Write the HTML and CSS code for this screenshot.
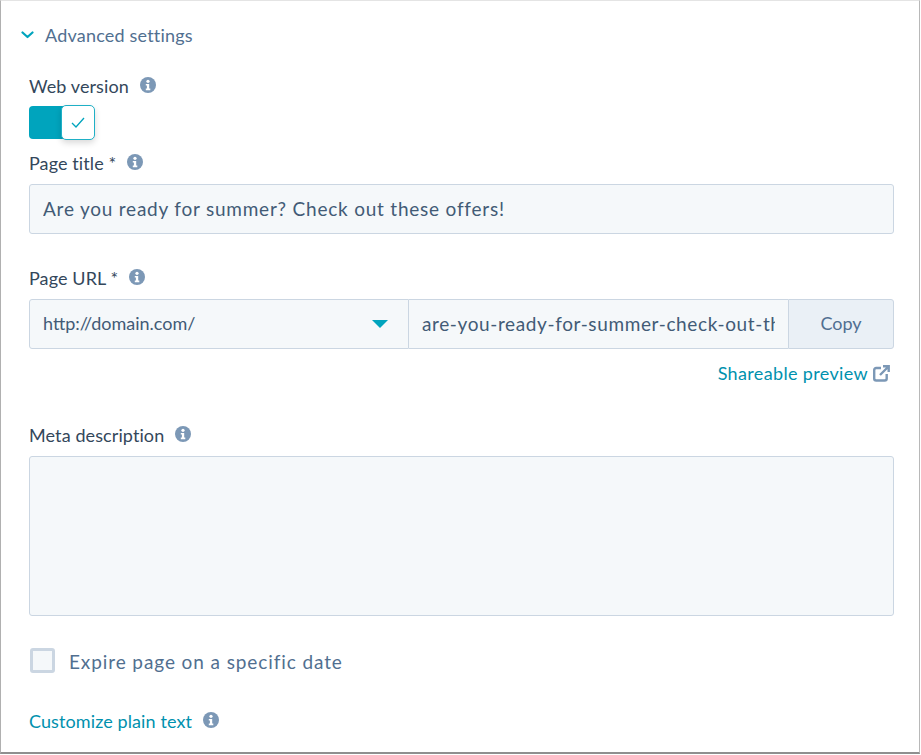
FILE: index.html
```html
<!DOCTYPE html>
<html lang="en">
<head>
    <meta charset="UTF-8">
    <title>Advanced settings</title>
    <link rel="stylesheet" href="styles.css">
</head>
<body>

<svg class="defs" width="0" height="0">
    <symbol id="info" viewBox="0 0 16 16">
        <circle cx="8" cy="8" r="8" fill="#7c98b6"/>
        <circle cx="8" cy="4.3" r="1.6" fill="#fff"/>
        <path d="M5.8 7h3.4v4.6h1.1v1.6H5.8v-1.6h1.1V8.6H5.8z" fill="#fff"/>
    </symbol>
</svg>

<div class="panel">
    <div class="toggleHeader">
        <svg class="chevron" width="13" height="8" viewBox="0 0 13 8"><path d="M1.5 1.5l5 4.5 5-4.5" fill="none" stroke="#00a4bd" stroke-width="2.2" stroke-linecap="round" stroke-linejoin="round"/></svg>
        <span>Advanced settings</span>
    </div>

    <!-- Web version -->
    <div class="labelRow first">
        <label>Web version</label>
        <svg class="info"><use href="#info"/></svg>
    </div>
    <div class="switch">
        <div class="switchKnob">
            <svg width="14" height="11" viewBox="0 0 14 11"><path d="M1 6l4 4 8-9" fill="none" stroke="#00a4bd" stroke-width="1.3"/></svg>
        </div>
    </div>

    <!-- Page title -->
    <div class="labelRow title">
        <label for="title">Page title *</label>
        <svg class="info"><use href="#info"/></svg>
    </div>
    <input type="text" id="title" class="field" value="Are you ready for summer? Check out these offers!">

    <!-- Page URL -->
    <div class="labelRow url">
        <label for="slug">Page URL *</label>
        <svg class="info"><use href="#info"/></svg>
    </div>
    <div class="urlRow">
        <div class="domain">
            <span>http://domain.com/</span>
            <span class="caret"></span>
        </div>
        <input type="text" id="slug" class="slug" value="are-you-ready-for-summer-check-out-these-offers">
        <button type="button" class="copyBtn">Copy</button>
    </div>
    <div class="previewRow">
        <a href="#" class="link">Shareable preview</a>
        <svg width="17" height="17" viewBox="0 0 17 17"><path d="M8 3H3.200C2 3 1.200 3.800 1.200 5v8.500c0 1.200.8 2 2 2h8.500c1.200 0 2-.8 2-2V9" fill="none" stroke="#7c98b6" stroke-width="2.400"/><path d="M10 1.300h5.700V7M15.500 1.500L7 10" fill="none" stroke="#7c98b6" stroke-width="2.400"/></svg>
    </div>

    <!-- Meta description -->
    <div class="labelRow meta">
        <label for="description">Meta description</label>
        <svg class="info"><use href="#info"/></svg>
    </div>
    <textarea id="description" class="field area"></textarea>

    <label class="checkRow">
        <input type="checkbox" class="check">
        <span>Expire page on a specific date</span>
    </label>

    <div class="labelRow plain">
        <a href="#" class="link">Customize plain text</a>
        <svg class="info"><use href="#info"/></svg>
    </div>
</div>

</body>
</html>
```

FILE: styles.css
```css
* {
    box-sizing: border-box;
}
html, body {
    margin: 0;
    height: 755px;
    overflow: hidden;
    background: #fff;
}
body {
    font-family: Lato, "Open Sans", sans-serif;
    font-size: 18px;
    color: #33475b;
}
.defs {
    position: absolute;
}
.panel {
    width: 920px;
    height: 754px;
    border-top: 1px solid #e4e4e4;
    border-left: 1px solid #b0b0b0;
    border-right: 1px solid #b8b8b8;
    border-bottom: 2px solid #8f8f8f;
    padding: 0 26px 0 28px;
}
.toggleHeader {
    display: flex;
    align-items: center;
    height: 24px;
    margin: 22px 0 0 -8px;
    color: #516f90;
    font-size: 18px;
    letter-spacing: 0.2px;
}
.chevron {
    margin-right: 11px;
}
.labelRow {
    display: flex;
    align-items: center;
    height: 22px;
    font-size: 18px;
    letter-spacing: 0.1px;
}
.labelRow .info {
    margin-left: 11px;
}
.info {
    width: 16px;
    height: 16px;
    margin-top: -2px;
}
.labelRow.first {
    margin-top: 28px;
}
.labelRow.title {
    margin-top: 13px;
}
.labelRow.url {
    margin-top: 33px;
}
.labelRow.meta {
    margin-top: 39px;
}
.labelRow.plain {
    margin-top: 37px;
}
.switch {
    position: relative;
    width: 64px;
    height: 33px;
    margin-top: 9px;
    background: #00a4bd;
    border-radius: 4px;
}
.switchKnob {
    position: absolute;
    top: -1px;
    right: -2px;
    width: 34px;
    height: 35px;
    display: flex;
    align-items: center;
    justify-content: center;
    background: #fff;
    border: 1.500px solid #1fb0c6;
    border-radius: 5px;
    box-shadow: 0 3px 6px rgba(0, 0, 0, 0.15);
}
.field {
    display: block;
    width: 865px;
    height: 50px;
    margin-top: 10px;
    padding: 0 13px 2px;
    font-family: inherit;
    font-size: 19px;
    letter-spacing: 0.78px;
    color: #425b76;
    background: #f5f8fa;
    border: 1px solid #cbd6e2;
    border-radius: 3px;
}
.area {
    height: 160px;
    resize: none;
}
.urlRow {
    display: flex;
    height: 50px;
    margin-top: 10px;
    width: 865px;
}
.domain {
    display: flex;
    align-items: center;
    justify-content: space-between;
    width: 380px;
    padding: 0 20px 2px 13px;
    color: #425b76;
    background: #f5f8fa;
    border: 1px solid #cbd6e2;
    border-radius: 3px 0 0 3px;
}
.caret {
    margin-top: 2px;
    border-left: 8px solid transparent;
    border-right: 8px solid transparent;
    border-top: 8px solid #00a4bd;
}
.slug {
    width: 379px;
    padding: 0 13px 2px;
    font-family: inherit;
    font-size: 19px;
    letter-spacing: 0.62px;
    color: #425b76;
    background: #f5f8fa;
    border: 1px solid #cbd6e2;
    border-left: none;
    border-right: none;
}
.copyBtn {
    flex: 1;
    padding-bottom: 3px;
    font: inherit;
    color: #506e91;
    background: #eaf0f6;
    border: 1px solid #cbd6e2;
    border-radius: 0 3px 3px 0;
}
.previewRow {
    display: flex;
    justify-content: flex-end;
    align-items: center;
    gap: 5px;
    width: 861px;
    height: 24px;
    margin-top: 12px;
    letter-spacing: 0.35px;
}
.link {
    color: #0091ae;
    text-decoration: none;
}
.checkRow {
    display: flex;
    align-items: center;
    margin: 32px 0 0 1px;
    color: #516f90;
    font-size: 19px;
    letter-spacing: 0.9px;
}
.checkRow span {
    padding-top: 2px;
}
.check {
    appearance: none;
    width: 25px;
    height: 25px;
    margin: 0 14px 0 0;
    background: #f5f8fa;
    border: 3px solid #cbd6e2;
    border-radius: 3px;
}
```
